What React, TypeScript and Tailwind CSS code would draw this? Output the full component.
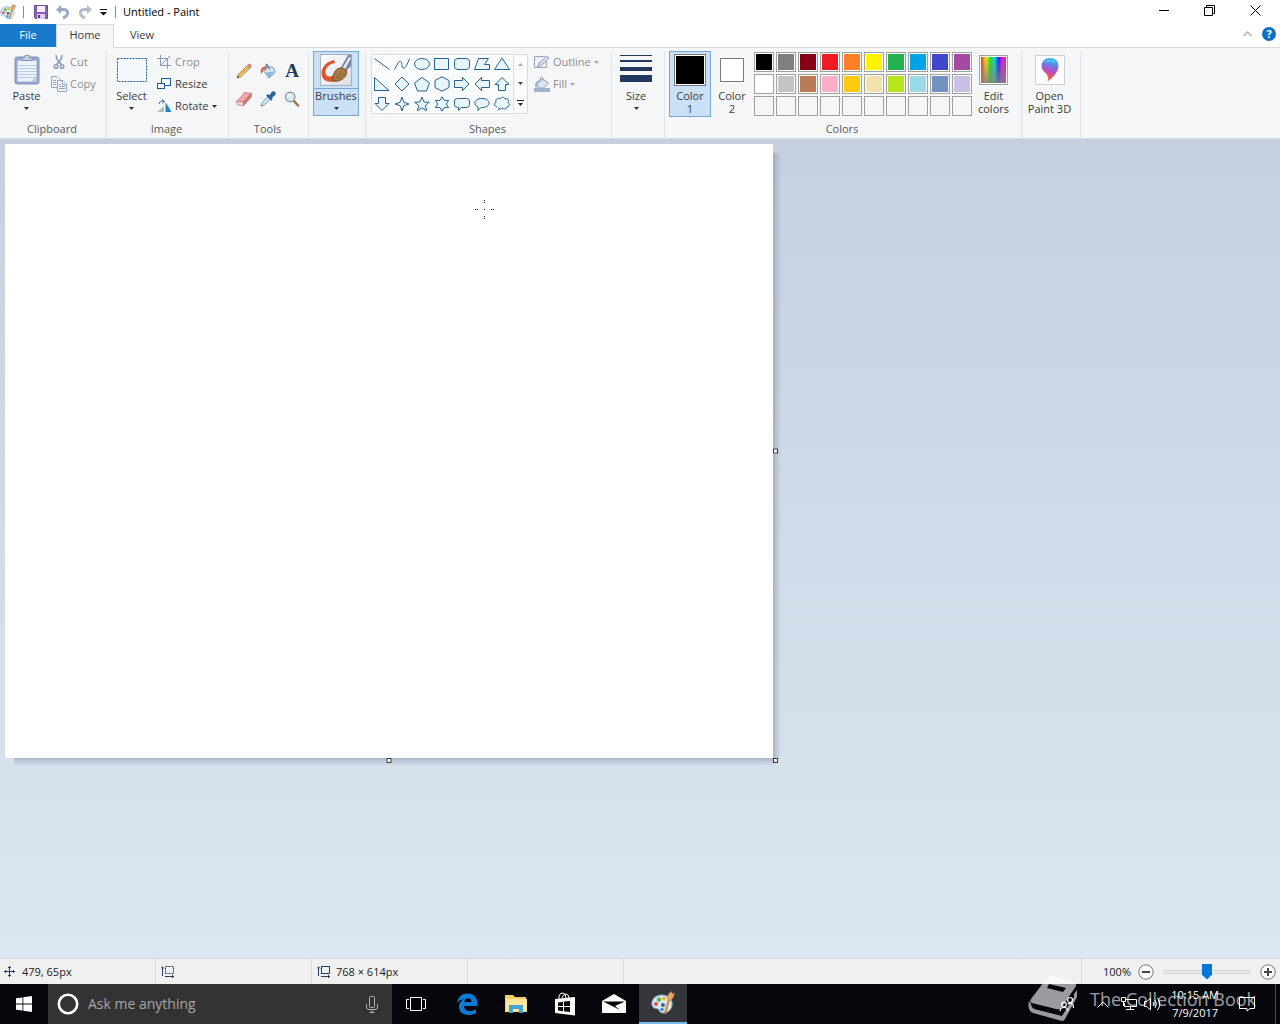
import React, { useState } from 'react';

const FONT = "font-['Open_Sans','Noto_Sans',sans-serif]";

const paletteRows = [
  ['#000000', '#7f7f7f', '#880015', '#ed1c24', '#ff7f27', '#fff200', '#22b14c', '#00a2e8', '#3f48cc', '#a349a4'],
  ['#ffffff', '#c3c3c3', '#b97a57', '#ffaec9', '#ffc90e', '#efe4b0', '#b5e61d', '#99d9ea', '#7092be', '#c8bfe7'],
];

const shapes = [
  { name: 'Line', d: 'M0.5 2.5 L15.5 13.5' },
  { name: 'Curve', d: 'M0.5 13.5 L3.5 8 C5.5 4 7.5 4.5 7.8 8.5 C8 13 10.5 13.5 12.5 9.5 L15.5 3' },
  { name: 'Oval', d: 'M0.5 8 A7.5 5.5 0 0 1 15.5 8 A7.5 5.5 0 0 1 0.5 8 Z' },
  { name: 'Rectangle', d: 'M0.5 2.5 H14.5 V13.5 H0.5 Z' },
  { name: 'Rounded rectangle', d: 'M4 2.5 H12 Q15.5 2.5 15.5 5.5 V10.5 Q15.5 13.5 12 13.5 H4 Q0.5 13.5 0.5 10.5 V5.5 Q0.5 2.5 4 2.5 Z' },
  { name: 'Polygon', d: 'M4.5 2.5 H14.5 L10.5 8.5 H15.5 V13.5 H0.5 Z' },
  { name: 'Triangle', d: 'M8 2 L15.5 13.5 H0.5 Z' },
  { name: 'Right triangle', d: 'M0.5 1.5 L15 14.5 H0.5 Z' },
  { name: 'Diamond', d: 'M8 1 L15 8 L8 15 L1 8 Z' },
  { name: 'Pentagon', d: 'M8 1.5 L15.5 7 L12.5 15 H3.5 L0.5 7 Z' },
  { name: 'Hexagon', d: 'M8 0.8 L15 4.5 V11.5 L8 15.2 L1 11.5 V4.5 Z' },
  { name: 'Right arrow', d: 'M0.5 4.5 H8.5 V1.5 L15 8 L8.5 14.5 V11.5 H0.5 Z' },
  { name: 'Left arrow', d: 'M15.5 4.5 H7.5 V1.5 L1 8 L7.5 14.5 V11.5 H15.5 Z' },
  { name: 'Up arrow', d: 'M4.5 14.5 V8.5 H1 L8 1.5 L15 8.5 H11.5 V14.5 Z' },
  { name: 'Down arrow', d: 'M4.5 1.5 V7.5 H1 L8 14.5 L15 7.5 H11.5 V1.5 Z' },
  { name: 'Four-point star', d: 'M8 1 L9.8 6.2 L15 8 L9.8 9.8 L8 15 L6.2 9.8 L1 8 L6.2 6.2 Z' },
  { name: 'Five-point star', d: 'M8 1 L10 6 L15.3 6.2 L11.2 9.7 L12.7 14.7 L8 11.8 L3.3 14.7 L4.8 9.7 L0.7 6.2 L6 6 Z' },
  { name: 'Six-point star', d: 'M8 0.8 L10 4.4 H14.6 L12.3 8 L14.6 11.6 H10 L8 15.2 L6 11.6 H1.4 L3.7 8 L1.4 4.4 H6 Z' },
  { name: 'Rounded callout', d: 'M3.5 2.5 H12.5 Q15.5 2.5 15.5 5 V8.5 Q15.5 11.5 12.5 11.5 H7.5 L4.5 14.5 V11.5 H3.5 Q0.5 11.5 0.5 8.5 V5 Q0.5 2.5 3.5 2.5 Z' },
  { name: 'Oval callout', d: 'M4 11 C-1.5 8.5 0.5 2.5 8 2.5 C17.5 2.5 17.5 11.5 8 11.5 L7 11.5 L4 14.5 Z' },
  { name: 'Cloud callout', d: 'M3 11 C0 10 0 7 2 6.5 C1 3 4 1.5 6 3 C7.5 0.8 10.5 0.8 11 3 C14 2 15.5 4.5 14 6.5 C16.5 8.5 15 11 13 11 C12.5 13.5 9.5 13.5 8.5 12 C7 13.5 4.5 13 4.5 11.5 M3.5 14.5 L5 13' },
];

const Caret = ({ className = 'fill-[#333]' }: { className?: string }) => (
  <svg width="5" height="3" viewBox="0 0 5 3" className={className} aria-hidden="true">
    <path d="M0 0 H5 L2.5 3 Z" />
  </svg>
);

const PaletteIcon = ({ size }: { size: number }) => (
  <svg width={size} height={size} viewBox="0 0 24 24" aria-hidden="true">
    <path d="M11 4 C4 4 0 9 1 14 C2 18 5 17 7 18 C9 19 8 22 12 22 C18 22 22 17 21 11 C20 7 16 4 11 4 Z" fill="#d7e9f5" stroke="#7fa9c8" />
    <circle cx="12" cy="14" r="2" fill="#44617e" />
    <circle cx="5" cy="13" r="2.1" fill="#e2574c" />
    <circle cx="8" cy="8.5" r="2.2" fill="#69b548" />
    <circle cx="13" cy="7.5" r="2" fill="#f3b72e" />
    <circle cx="11" cy="18.5" r="1.8" fill="#3c8fdc" />
    <path d="M17 8 L19 9 L15 23 L13 22 Z" fill="#d98632" />
    <path d="M16.5 8 C16 4 18 2 21 0.5 L21 3 L23.5 2 C23 5 22 8 19.5 9.5 Z" fill="#e9a563" stroke="#b87434" strokeWidth="0.6" />
  </svg>
);

const PasteIcon = () => (
  <svg width="26" height="32" viewBox="0 0 26 32" aria-hidden="true">
    <rect x="1" y="3" width="24" height="27" rx="2" fill="#92a5cd" stroke="#8295bf" />
    <rect x="3.5" y="6.5" width="19" height="21" fill="#edf2fb" />
    <path d="M4 11.5 H22 M4 14.5 H22 M4 17.5 H22 M4 20.5 H22 M4 23.5 H22" stroke="#bccbe5" />
    <path d="M17 27.5 L22.5 22 V27.5 Z" fill="#b8c6df" />
    <path d="M7 6.5 V4 H10 Q10 1 13 1 Q16 1 16 4 H19 V6.5 Z" fill="#c3cee2" stroke="#7f91b6" />
  </svg>
);

const CutIcon = () => (
  <svg width="16" height="16" viewBox="0 0 16 16" fill="none" stroke="#8b9bb8" strokeWidth="1.5" aria-hidden="true">
    <path d="M5 1 C5 5 7 7 11 11 M11 1 C11 5 9 7 5 11" />
    <circle cx="5" cy="12.5" r="1.8" />
    <circle cx="11" cy="12.5" r="1.8" />
  </svg>
);

const CopyIcon = () => (
  <svg width="16" height="16" viewBox="0 0 16 16" fill="#f1f4fa" stroke="#93a5c6" aria-hidden="true">
    <path d="M0.5 0.5 H6 L9.5 4 V11.5 H0.5 Z" />
    <path d="M2 4.5 H5 M2 6.5 H5 M2 8.5 H5" />
    <path d="M6.5 4.5 H12 L15.5 8 V15.5 H6.5 Z" />
    <path d="M11.5 4.5 V8.5 H15.5 M8 8.5 H10 M8 10.5 H14 M8 12.5 H14" />
  </svg>
);

const CropIcon = () => (
  <svg width="14" height="14" viewBox="0 0 14 14" fill="none" stroke="#8b9bbb" aria-hidden="true">
    <path d="M3.5 0 V10.5 H14 M0 3.5 H10.5 V14 M3.5 10.5 L13 1" />
  </svg>
);

const ResizeIcon = () => (
  <svg width="14" height="14" viewBox="0 0 14 14" fill="#f5f9fd" stroke="#1b5a96" aria-hidden="true">
    <rect x="4.5" y="1.5" width="9" height="7" />
    <rect x="0.5" y="6.5" width="7" height="5" />
  </svg>
);

const RotateIcon = () => (
  <svg width="15" height="14" viewBox="0 0 15 14" aria-hidden="true">
    <path d="M0 13 L7 7.5 V13 Z" fill="#b5b9bd" />
    <path d="M8.5 13 V3 L14.5 13 Z" fill="#2383c8" />
    <path d="M2 5 C2.5 2 4.5 1.5 7 2.5 M5 0.5 L7.5 2.5 L5 4.5" fill="none" stroke="#2b6ca8" />
  </svg>
);

const tools = [
  { name: 'Pencil', icon: (
    <svg width="16" height="16" viewBox="0 0 16 16">
      <path d="M1 15 L2.2 11.5 L11.5 2.5 L14 5 L4.5 14 Z" fill="#f6c566" stroke="#9a6a32" strokeWidth="0.7" />
      <path d="M11.5 2.5 L13 1 Q14 0.8 15 2 Q15.6 3 15 4 L14 5 Z" fill="#e88a83" stroke="#a35f58" strokeWidth="0.5" />
      <path d="M1 15 L1.7 13 L3 14.3 Z" fill="#222" />
      <path d="M3 12.8 L12.6 3.6" stroke="#c98b34" strokeWidth="0.7" />
    </svg>
  ) },
  { name: 'Fill with color', icon: (
    <svg width="16" height="16" viewBox="0 0 16 16">
      <path d="M6.5 3.5 L13 4.5 L15.5 9 L9 15 L4 8.5 Z" fill="#d3e6f4" stroke="#5781a5" strokeWidth="0.8" />
      <path d="M5.5 9.5 L14.8 8.5 L9 14.3 Z" fill="#89b8da" />
      <path d="M6 7 V2 Q6 0.3 7.3 1.3 L9.5 6.5" fill="none" stroke="#4d6680" />
      <path d="M0.5 8 C1 4.5 3 3 6.5 3.5 L4.5 6.5 C3 7 2.5 10.5 1.5 10.5 Q0.5 10 0.5 8 Z" fill="#e0653f" />
    </svg>
  ) },
  { name: 'Text', icon: <span className="font-['Liberation_Serif',serif] text-[19px] leading-4 font-bold text-[#213a5e]">A</span> },
  { name: 'Eraser', icon: (
    <svg width="16" height="16" viewBox="0 0 16 16" stroke="#b75f64" strokeWidth="0.6">
      <path d="M0.8 10.5 L8.5 1.5 L15.3 2.3 L7.5 11 Z" fill="#f2a9ab" />
      <path d="M0.8 10.5 L7.5 11 V14.8 L1.3 13.8 Z" fill="#fbd5d4" />
      <path d="M7.5 11 L15.3 2.3 V6 L7.5 14.8 Z" fill="#dd7278" />
    </svg>
  ) },
  { name: 'Color picker', icon: (
    <svg width="16" height="16" viewBox="0 0 16 16">
      <path d="M1 15 L2 12 L8 5.5 L10.5 8 L4.2 14 Z" fill="#d5e9f6" stroke="#58799b" strokeWidth="0.8" />
      <path d="M6.5 4.5 L8 3.5 L9.5 4.5 L12 1 Q14 0 15.2 1.5 Q15.8 3 14.7 4.2 L11.5 7 L12.3 8.3 L11 9.5 Z" fill="#2866a0" stroke="#1c4d80" strokeWidth="0.5" />
    </svg>
  ) },
  { name: 'Magnifier', icon: (
    <svg width="16" height="16" viewBox="0 0 16 16">
      <path d="M9.5 9.5 L14 14.5" stroke="#9a6d42" strokeWidth="2.4" strokeLinecap="round" />
      <circle cx="6.2" cy="6" r="4.7" fill="#d9edf9" stroke="#8a98a6" strokeWidth="1.4" />
      <path d="M3.5 6 Q4 3.5 6.5 3.4" fill="none" stroke="#fff" />
    </svg>
  ) },
];

const BrushIcon = () => (
  <svg width="32" height="32" viewBox="0 0 32 32" aria-hidden="true">
    <defs>
      <linearGradient id="brushBg" x1="0" y1="0" x2="1" y2="1">
        <stop offset="0" stopColor="#ffffff" />
        <stop offset="1" stopColor="#d9dde3" />
      </linearGradient>
    </defs>
    <rect x="0.5" y="0.5" width="31" height="31" fill="url(#brushBg)" stroke="#a5b0bc" />
    <path d="M14 6 C5 8 0 15 2 22 C4 29 12 29 20 25 L15 20 C10 24 6 23 5.5 19 C5 14 9 10 15 9 Z" fill="#e0532b" />
    <path d="M20 15 L28 1 H31 V12 L25 18 Z" fill="#7885a3" />
    <path d="M22 15 L29 3 L31 4 L24 17 Z" fill="#e8ecf3" />
    <path d="M13 25 C13 19 16 14 21 14 C25 14 28 17 26 21 C23 26 19 28 12 27 Z" fill="#a77a45" stroke="#6e4b25" />
    <path d="M16 24 L22 17 M18 25 L24 19" stroke="#8d6433" />
  </svg>
);

const OutlineIcon = () => (
  <svg width="16" height="14" viewBox="0 0 16 14" fill="#eef1f6" stroke="#98a6bd" aria-hidden="true">
    <path d="M12.5 6 V12.5 H0.5 V1.5 H11" />
    <path d="M3.5 12 L5 8 L13 0.8 L15.2 3 L7.5 10.5 Z" fill="#cfd7e5" />
  </svg>
);

const FillIcon = () => (
  <svg width="16" height="16" viewBox="0 0 16 16" aria-hidden="true">
    <rect x="0" y="12" width="16" height="4" fill="#a3b3cf" />
    <path d="M8 2.5 L14.5 7 L9.5 12 H5 L3 8 Z" fill="#dce4f0" stroke="#8fa1c1" />
    <path d="M6.5 6 V1.5 Q7.5 0 8.5 1.5 L10 5" fill="none" stroke="#8fa1c1" />
    <path d="M1 11 C1 6 2.5 4.5 6 4.5 L3.5 8 L3 12 Z" fill="#a0b1cf" />
  </svg>
);

const EditColorsIcon = () => (
  <svg width="29" height="30" viewBox="0 0 29 30" aria-hidden="true">
    <defs>
      <linearGradient id="spectrum">
        <stop offset="0" stopColor="#f22" />
        <stop offset="0.2" stopColor="#ee1" />
        <stop offset="0.38" stopColor="#2d2" />
        <stop offset="0.54" stopColor="#1dd" />
        <stop offset="0.7" stopColor="#22e" />
        <stop offset="0.86" stopColor="#e1e" />
        <stop offset="1" stopColor="#e23" />
      </linearGradient>
      <linearGradient id="spectrumFade" x1="0" y1="0" x2="0" y2="1">
        <stop offset="0" stopColor="#808080" stopOpacity="0" />
        <stop offset="1" stopColor="#808080" stopOpacity="0.85" />
      </linearGradient>
    </defs>
    <rect x="0.5" y="0.5" width="28" height="29" fill="#fff" stroke="#a0a0a0" />
    <rect x="2" y="2" width="25" height="26" fill="url(#spectrum)" />
    <rect x="2" y="2" width="25" height="26" fill="url(#spectrumFade)" />
  </svg>
);

const Paint3DIcon = () => (
  <svg width="30" height="30" viewBox="0 0 30 30" aria-hidden="true">
    <defs>
      <linearGradient id="drop" x1="0.6" y1="0" x2="0.4" y2="1">
        <stop offset="0" stopColor="#28bdf0" />
        <stop offset="0.3" stopColor="#6b80e4" />
        <stop offset="0.5" stopColor="#b056c8" />
        <stop offset="0.7" stopColor="#ee4a6a" />
        <stop offset="1" stopColor="#f9803c" />
      </linearGradient>
    </defs>
    <rect x="0.5" y="0.5" width="29" height="29" fill="#fff" stroke="#cfcfcf" />
    <path d="M15 3 C20 3 23.5 6.5 23.5 11 C23.5 17 18 22 12.5 27 C13.5 23 13 21 11 18.5 C8 16 6.5 14 6.5 11 C6.5 6.5 10 3 15 3 Z" fill="url(#drop)" />
    <path d="M9 8 C11 4 18 3 21 8 C17 6 13 6 9 8 Z" fill="#53d4f3" opacity="0.7" />
    <path d="M15 12 C18 10 21 11 22 14 C20 18 17 20 15 21 Z" fill="#8a5ae0" opacity="0.4" />
  </svg>
);

type GroupProps = { label?: string; className: string; children: React.ReactNode };

const Group = ({ label, className, children }: GroupProps) => (
  <section className={`flex shrink-0 flex-col border-r border-[#e2e3e4] ${className}`}>
    <div className="flex flex-1 items-start">{children}</div>
    {label && <h2 className="h-[18px] pr-[2px] text-center leading-[18px] text-[#5a5a5a]">{label}</h2>}
  </section>
);

type SmallButtonProps = { icon: React.ReactNode; label: string; disabled?: boolean; caret?: boolean };

const SmallButton = ({ icon, label, disabled, caret }: SmallButtonProps) => (
  <button disabled={disabled} className="flex h-[22px] items-center gap-[3px] whitespace-nowrap text-[#3b3b3b] disabled:text-[#8d8d8d]">
    <span className="flex w-4 justify-center">{icon}</span>
    <span className="pb-[2px]">{label}</span>
    {caret && <Caret className={disabled ? 'fill-[#aaa]' : 'fill-[#333]'} />}
  </button>
);

const TitleBar = () => (
  <header className="flex h-6 items-center bg-white">
    <PaletteIcon size={16} />
    <span className="ml-[7px] h-3 w-px bg-[#8a8a8a]" />
    <button aria-label="Save" className="ml-[10px]">
      <svg width="14" height="14" viewBox="0 0 14 14">
        <path d="M0.5 0.5 H13.5 V13.5 H1.5 L0.5 12.5 Z" fill="#8b62b3" stroke="#6d4a98" />
        <rect x="3" y="1" width="8" height="6" fill="#f3eff8" />
        <rect x="3" y="9" width="8" height="5" fill="#d9cfe6" />
        <rect x="4" y="10" width="2" height="3" fill="#5d4182" />
      </svg>
    </button>
    <button aria-label="Undo" className="ml-2">
      <svg width="14" height="14" viewBox="0 0 14 14">
        <path d="M3 4.5 H8 Q12 5 11.5 8.5 Q11 11.5 7 13" fill="none" stroke="#9aa9c4" strokeWidth="3" />
        <path d="M0 4.5 L5 0 V9 Z" fill="#9aa9c4" />
      </svg>
    </button>
    <button aria-label="Redo" className="ml-2">
      <svg width="14" height="14" viewBox="0 0 14 14">
        <path d="M10 4.5 H6 Q2 5 2.5 8.5 Q3 11.5 7 13" fill="none" stroke="#b3bdce" strokeWidth="3" />
        <path d="M14 4.5 L9 0 V9 Z" fill="#b3bdce" />
      </svg>
    </button>
    <button aria-label="Customize Quick Access Toolbar" className="ml-2">
      <svg width="7" height="7" viewBox="0 0 7 7">
        <path d="M0 0.5 H7" stroke="#111" />
        <path d="M0 3 H7 L3.5 6.5 Z" fill="#111" />
      </svg>
    </button>
    <span className="ml-2 h-3 w-px bg-[#8a8a8a]" />
    <h1 className="ml-[7px] flex-1 text-black">Untitled - Paint</h1>
    <div className="flex pr-px pb-1">
      <button aria-label="Minimize" className="flex h-5 w-[45px] items-center justify-center">
        <svg width="11" height="11" viewBox="0 0 11 11"><path d="M0 5.5 H10" stroke="#000" /></svg>
      </button>
      <button aria-label="Restore" className="flex h-5 w-[45px] items-center justify-center">
        <svg width="11" height="11" viewBox="0 0 11 11" fill="none" stroke="#000"><path d="M0.5 2.5 H8.5 V10.5 H0.5 Z M2.5 2.5 V0.5 H10.5 V8.5 H8.5" /></svg>
      </button>
      <button aria-label="Close" className="flex h-5 w-[47px] items-center justify-center">
        <svg width="11" height="11" viewBox="0 0 11 11" stroke="#000"><path d="M0.5 0.5 L10.5 10.5 M10.5 0.5 L0.5 10.5" /></svg>
      </button>
    </div>
  </header>
);

const Tabs = () => (
  <nav className="flex h-6 items-stretch bg-white">
    <button className="mb-px w-14 bg-[#1979ca] pb-[2px] text-white">File</button>
    <button className="w-[58px] border-x border-t border-[#dadbdc] bg-[#f5f6f7] pb-[3px] text-[#3b3b3b]">Home</button>
    <button className="w-14 border-b border-[#dadbdc] pb-[2px] text-[#3b3b3b]">View</button>
    <div className="flex flex-1 items-center justify-end gap-[10px] border-b border-[#dadbdc] pr-1 pb-[3px]">
      <button aria-label="Minimize the Ribbon">
        <svg width="9" height="6" viewBox="0 0 9 6" fill="none" stroke="#b5aeaa" strokeWidth="1.4"><path d="M0.5 5 L4.5 1 L8.5 5" /></svg>
      </button>
      <button aria-label="Help" className="size-[14px] rounded-full bg-[#0f6fc6] text-[11px] leading-[14px] font-bold text-white">?</button>
    </div>
  </nav>
);

const Ribbon = () => (
  <div className="flex h-[91px] overflow-hidden border-b border-[#d5dae2] bg-[#f5f6f7] pt-[3px] leading-[13px] text-[#3b3b3b]">
    <Group label="Clipboard" className="w-[107px]">
      <button className="ml-1 flex w-[45px] flex-col items-center pt-[3px]">
        <PasteIcon />
        <span className="mt-[3px] mb-[5px]">Paste</span>
        <Caret />
      </button>
      <div className="ml-[2px]">
        <SmallButton icon={<CutIcon />} label="Cut" disabled />
        <SmallButton icon={<CopyIcon />} label="Copy" disabled />
      </div>
    </Group>

    <Group label="Image" className="w-[122px]">
      <button className="ml-[3px] flex w-[43px] flex-col items-center pt-[3px]">
        <svg width="32" height="32" viewBox="0 0 32 32">
          <rect x="1.5" y="4.5" width="29" height="23" fill="#f4f9fe" stroke="#255f99" strokeDasharray="2 1" />
        </svg>
        <span className="mt-[3px] mb-[5px]">Select</span>
        <Caret />
      </button>
      <div className="ml-[3px]">
        <SmallButton icon={<CropIcon />} label="Crop" disabled />
        <SmallButton icon={<ResizeIcon />} label="Resize" />
        <SmallButton icon={<RotateIcon />} label="Rotate" caret />
      </div>
    </Group>

    <Group label="Tools" className="w-20">
      <div className="grid grid-cols-3 gap-x-2 gap-y-3 pt-3 pl-[7px]">
        {tools.map((tool) => (
          <button key={tool.name} aria-label={tool.name} className="flex size-4 items-center justify-center">{tool.icon}</button>
        ))}
      </div>
    </Group>

    <Group className="w-[57px]">
      <button className="ml-1 flex w-[46px] flex-col items-center border border-[#79a5d3] bg-[#c9e0f7] pt-[2px] pb-[5px]">
        <BrushIcon />
        <span className="mt-[2px] mb-[5px] w-full border-t border-[#79a5d3]">Brushes</span>
        <Caret />
      </button>
    </Group>

    <Group label="Shapes" className="w-[246px]">
      <div className="mt-[3px] ml-[5px] flex h-[60px] border border-[#d5dce4] bg-[#fafcfe]">
        <div className="grid grid-cols-7 gap-x-1 gap-y-1 py-px pr-[3px] pl-[2px]">
          {shapes.map((shape) => (
            <button key={shape.name} aria-label={shape.name} className="size-4">
              <svg width="16" height="16" viewBox="0 0 16 16" fill={/Line|Curve/.test(shape.name) ? 'none' : '#e8f5fc'} stroke="#28618f">
                <path d={shape.d} />
              </svg>
            </button>
          ))}
        </div>
        <div className="flex w-[14px] flex-col border-l border-[#d5dce4]">
          <button aria-label="Scroll up" className="flex flex-1 items-center justify-center"><Caret className="rotate-180 fill-[#aaa]" /></button>
          <button aria-label="Scroll down" className="flex flex-1 items-center justify-center"><Caret className="fill-[#444]" /></button>
          <button aria-label="More shapes" className="flex flex-1 items-center justify-center">
            <svg width="7" height="6" viewBox="0 0 7 6"><path d="M0 0.5 H7" stroke="#223" /><path d="M1 3 H6 L3.5 6 Z" fill="#223" /></svg>
          </button>
        </div>
      </div>
      <div className="ml-[6px]">
        <SmallButton icon={<OutlineIcon />} label="Outline" disabled caret />
        <SmallButton icon={<FillIcon />} label="Fill" disabled caret />
      </div>
    </Group>

    <Group className="w-[53px]">
      <button className="flex w-12 flex-col items-center pt-[3px]">
        <svg width="32" height="32" viewBox="0 0 32 32" fill="#22395f">
          <path d="M0 1 H32 V2 H0 Z M0 6 H32 V8 H0 Z M0 13 H32 V17 H0 Z M0 21 H32 V28 H0 Z" />
        </svg>
        <span className="mt-[3px] mb-[5px]">Size</span>
        <Caret />
      </button>
    </Group>

    <Group label="Colors" className="w-[357px]">
      <button className="ml-1 flex h-[66px] w-[42px] flex-col items-center border border-[#79a5d3] bg-[#c9e0f7] pt-[2px]">
        <span className="size-8 border border-[#7a7a7a] bg-black ring-1 ring-white ring-inset" />
        <span className="mt-[3px] w-8">Color 1</span>
      </button>
      <button className="flex h-[66px] w-[42px] flex-col items-center pt-[3px]">
        <span className="my-1 size-6 border border-[#7a7a7a] bg-white" />
        <span className="mt-[3px] w-8">Color 2</span>
      </button>
      <div className="mt-px ml-[1px] grid grid-cols-10 gap-[2px]">
        {paletteRows.flat().map((color) => (
          <button key={color} aria-label={color} className="size-5 border border-[#a0a0a0] bg-white p-px">
            <span className="block size-4" style={{ backgroundColor: color }} />
          </button>
        ))}
        {paletteRows[0].map((color, i) => (
          <button key={i} aria-label={`Custom color ${i + 1}`} className="size-5 border border-[#a0a0a0]" />
        ))}
      </div>
      <button className="flex w-[43px] flex-col items-center pt-[4px]">
        <EditColorsIcon />
        <span className="mt-1 w-8">Edit colors</span>
      </button>
    </Group>

    <Group className="w-[59px]">
      <button className="flex w-[55px] flex-col items-center pt-[4px]">
        <Paint3DIcon />
        <span className="mt-1 whitespace-nowrap">Open<br />Paint 3D</span>
      </button>
    </Group>
  </div>
);

const Handle = ({ className }: { className: string }) => (
  <div className={`absolute size-[5px] border border-[#333] bg-white ${className}`} />
);

const Workspace = () => (
  <main className="flex-1 bg-gradient-to-b from-[#c5cfdf] to-[#dce6f2] p-[5px]">
    <div className="relative h-[614px] w-[768px] bg-white">
      <div className="absolute top-[9px] bottom-0 left-full w-2 bg-gradient-to-r from-[#7d8ba5]/50 to-transparent" />
      <div className="absolute top-full right-0 left-[9px] h-2 bg-gradient-to-b from-[#7d8ba5]/50 to-transparent" />
      <Handle className="top-1/2 left-full -translate-y-1/2" />
      <Handle className="top-full left-1/2 -translate-x-1/2" />
      <Handle className="top-full left-full" />
      <svg width="19" height="19" viewBox="0 0 19 19" className="absolute top-14 left-[470px]" aria-hidden="true">
        <path d="M9 0h1v1h-1z M9 2h1v1h-1z M9 9h1v1h-1z M9 16h1v1h-1z M9 18h1v1h-1z M0 9h1v1h-1z M2 9h1v1h-1z M16 9h1v1h-1z M18 9h1v1h-1z" />
      </svg>
    </div>
  </main>
);

const StatusBar = () => {
  const [zoom, setZoom] = useState(50);

  return (
    <footer className="flex h-[26px] items-center border-t border-[#d3dae3] bg-[#f0f0f0] text-[#1a1a1a]">
      <div className="flex h-full w-[156px] items-center gap-[7px] border-r border-[#dadada] pl-1">
        <svg width="11" height="11" viewBox="0 0 11 11" fill="none" stroke="#243f63"><path d="M5.5 0 V11 M0 5.5 H11 M4 2 L5.5 0.5 L7 2 M4 9 L5.5 10.5 L7 9 M2 4 L0.5 5.5 L2 7 M9 4 L10.5 5.5 L9 7" /></svg>
        479, 65px
      </div>
      <div className="flex h-full w-[156px] items-center border-r border-[#dadada] pl-[5px]">
        <svg width="14" height="12" viewBox="0 0 14 12" fill="none" stroke="#243f63"><path d="M1.5 10 V0.5 M0 2.5 L1.5 1 L3 2.5 M4 10.5 H13 M11 9 L12.5 10.5 L11 12" /><rect x="4.5" y="0.5" width="8" height="7" strokeDasharray="2 1" /></svg>
      </div>
      <div className="flex h-full w-[156px] items-center gap-[5px] border-r border-[#dadada] pl-[5px]">
        <svg width="14" height="12" viewBox="0 0 14 12" fill="none" stroke="#243f63"><path d="M1.5 10 V0.5 M0 2.5 L1.5 1 L3 2.5 M4 10.5 H13 M11 9 L12.5 10.5 L11 12" /><rect x="4.5" y="0.5" width="8" height="7" /></svg>
        768 × 614px
      </div>
      <div className="h-full w-[156px] border-r border-[#dadada]" />
      <div className="h-full flex-1 border-r border-[#dadada]" />
      <div className="flex items-center pr-1 pl-[21px]">
        <span>100%</span>
        <button aria-label="Zoom out" className="ml-[7px]">
          <svg width="16" height="16" viewBox="0 0 16 16" fill="#fafafa" stroke="#777"><circle cx="8" cy="8" r="7.2" /><path d="M4 8 H12" stroke="#444" strokeWidth="2" /></svg>
        </button>
        <input
          type="range"
          aria-label="Zoom"
          value={zoom}
          onChange={(e) => setZoom(Number(e.target.value))}
          className="mx-[10px] h-4 w-[86px] appearance-none bg-transparent [&::-webkit-slider-runnable-track]:h-1 [&::-webkit-slider-runnable-track]:border [&::-webkit-slider-runnable-track]:border-[#d6d6d6] [&::-webkit-slider-runnable-track]:bg-[#e7eaea] [&::-webkit-slider-thumb]:-mt-[7px] [&::-webkit-slider-thumb]:h-4 [&::-webkit-slider-thumb]:w-[10px] [&::-webkit-slider-thumb]:appearance-none [&::-webkit-slider-thumb]:bg-[#0078d7] [&::-webkit-slider-thumb]:[clip-path:polygon(0_0,100%_0,100%_70%,50%_100%,0_70%)]"
        />
        <button aria-label="Zoom in">
          <svg width="16" height="16" viewBox="0 0 16 16" fill="#fafafa" stroke="#777"><circle cx="8" cy="8" r="7.2" /><path d="M4 8 H12 M8 4 V12" stroke="#444" strokeWidth="2" /></svg>
        </button>
      </div>
    </footer>
  );
};

const apps = [
  { name: 'Microsoft Edge', icon: (
    <svg width="22" height="22" viewBox="0 0 22 22" fill="#0b7bd6">
      <path d="M1 10 C2 3.5 6.5 0.5 11.5 0.5 C18 0.5 21.5 5 21.5 10.5 V13 H8 C8.3 19 15.5 19 20 16.2 V20.3 C12 24 3 21.5 3 14 C3 10 5.5 7.3 8.5 6 C5.5 6.3 2.8 7.5 1 10 Z M8.2 9 H15.5 C15.5 3.8 8.7 4.2 8.2 9 Z" fillRule="evenodd" />
    </svg>
  ) },
  { name: 'File Explorer', icon: (
    <svg width="22" height="20" viewBox="0 0 22 20">
      <path d="M0 1 H8 L10 3 H21 V18 H0 Z" fill="#f5cf65" />
      <path d="M1 5 H22 V18 H1 Z" fill="#fde69a" />
      <path d="M4 19 V11 H18 V19 H14 V15 H8 V19 Z" fill="#42a3d5" />
    </svg>
  ) },
  { name: 'Store', icon: (
    <svg width="22" height="24" viewBox="0 0 22 24">
      <path d="M5 7 V4 Q6 0.7 9 1 Q12 1.5 12 6 M8 6 Q9 2 12 2 Q15 2.5 15 6" fill="none" stroke="#fff" />
      <path d="M1 7 L21 5 V23.5 L1 21 Z" fill="#fff" />
      <path d="M4 10.5 L9 9.8 V13.9 H4 Z M10 9.6 L16 9 V13.9 H10 Z M4 14.9 H9 V19.2 L4 18.5 Z M10 14.9 H16 V20 L10 19.3 Z" fill="#05070d" />
    </svg>
  ) },
  { name: 'Mail', icon: (
    <svg width="24" height="20" viewBox="0 0 24 20">
      <path d="M0 7 L12 0 L24 7 V19 H0 Z" fill="#fff" />
      <path d="M1 7.5 H23 L13 12 L18 16 L10 12 Z" fill="#05070d" />
    </svg>
  ) },
];

const Taskbar = () => (
  <div className="relative flex h-10 items-stretch bg-[#04060c] text-white">
    <button aria-label="Start" className="flex w-12 items-center justify-center">
      <svg width="16" height="16" viewBox="0 0 16 16" fill="#fff"><path d="M0 2.3 L6.5 1.4 V7.6 H0 Z M7.3 1.3 L16 0 V7.6 H7.3 Z M0 8.4 H6.5 V14.6 L0 13.7 Z M7.3 8.4 H16 V16 L7.3 14.7 Z" /></svg>
    </button>
    <label className="flex w-[344px] items-center bg-[#333] pr-[14px] pl-[9px]">
      <svg width="22" height="22" viewBox="0 0 22 22" aria-hidden="true"><circle cx="11" cy="11" r="9.2" fill="none" stroke="#fff" strokeWidth="2.6" /></svg>
      <input aria-label="Search" placeholder="Ask me anything" className="mx-[9px] h-6 min-w-0 flex-1 bg-transparent text-[14px] leading-6 outline-none placeholder:text-[#a6a6a6]" />
      <svg width="12" height="17" viewBox="0 0 12 17" fill="none" stroke="#b0b0b0" aria-hidden="true"><rect x="3.5" y="0.5" width="5" height="11" rx="1" /><path d="M0.5 8 V11 Q0.5 13.5 3 13.5 H9 Q11.5 13.5 11.5 11 V8 M6 13.5 V16.5 M3.5 16.5 H8.5" /></svg>
    </label>
    <button aria-label="Task View" className="flex w-12 items-center justify-center">
      <svg width="20" height="14" viewBox="0 0 20 14" fill="none" stroke="#fff"><path d="M4.5 0.5 H15.5 V13.5 H4.5 Z M3 2.5 H0.5 V11.5 H3 M17 2.5 H19.5 V11.5 H17" /></svg>
    </button>
    <div className="ml-[3px] flex gap-px">
      {apps.map((app) => (
        <button key={app.name} aria-label={app.name} className="flex w-12 items-center justify-center">{app.icon}</button>
      ))}
      <button aria-label="Paint" className="flex w-12 items-center justify-center border-b-2 border-[#76b9ed] bg-[#34363b]">
        <PaletteIcon size={24} />
      </button>
    </div>
    <div className="ml-auto flex items-center pr-1">
      <button aria-label="People">
        <svg width="16" height="16" viewBox="0 0 16 16" fill="none" stroke="#fff" strokeWidth="1.2"><circle cx="11" cy="4" r="2.5" /><circle cx="5" cy="8.5" r="2.3" /><path d="M1 15 Q1 11.5 5 11.5 Q9 11.5 9 15 M8.5 8 Q14.5 5.5 14.5 12" /></svg>
      </button>
      <button aria-label="Show hidden icons" className="ml-[22px]">
        <svg width="12" height="7" viewBox="0 0 12 7" fill="none" stroke="#fff"><path d="M0.5 6.5 L6 1 L11.5 6.5" /></svg>
      </button>
      <button aria-label="Network" className="ml-3">
        <svg width="16" height="14" viewBox="0 0 16 14" fill="none" stroke="#fff"><path d="M5 2.5 H15.5 V9.5 H3.5 V6 M9.5 9.5 V12.5 M5 12.5 H13 M0.5 0.5 H4.5 V4.5 H0.5 Z M2.5 4.5 V9" /></svg>
      </button>
      <button aria-label="Volume" className="ml-[7px]">
        <svg width="17" height="14" viewBox="0 0 17 14" fill="none" stroke="#fff"><path d="M0.5 4.5 H3 L6.5 1 V13 L3 9.5 H0.5 Z M9 5 Q10.5 7 9 9 M11 3 Q14 7 11 11 M13.5 1 Q18 7 13.5 13" /></svg>
      </button>
      <button className="ml-[10px] text-center text-[11px] leading-[18px]">10:15 AM<br />7/9/2017</button>
      <button aria-label="Action Center" className="ml-5">
        <svg width="16" height="16" viewBox="0 0 16 16" fill="none" stroke="#fff"><path d="M0.5 1.5 H15.5 V12.5 H11 L8 15 V12.5 H0.5 Z" /></svg>
      </button>
      <span className="ml-5 h-10 w-px bg-[#4a4c50]" />
    </div>
    <div className="pointer-events-none absolute right-6 bottom-px flex items-center gap-3 opacity-60">
      <svg width="50" height="48" viewBox="0 0 50 48" aria-hidden="true">
        <path d="M19 3 Q21 0 25 1 L46 7 Q49 8 48 11 L34 32 Q32 35 28 34 L4 28 Q1 27 3 24 Z M21 9 L19 13 L35 17 L38 13 Z" fill="#fff" fillRule="evenodd" />
        <path d="M1 26 Q-1 35 5 38 L34 46 Q36 46 37 44 L49 22 V15 L46 19 V22 L34 41 L6 34 Q3 32 3 29 Z" fill="#fff" />
      </svg>
      <span className="text-[18px] leading-6">The Collection Book</span>
    </div>
  </div>
);

export default function App() {
  return (
    <div className={`flex min-h-screen flex-col text-[11px] leading-4 ${FONT}`}>
      <TitleBar />
      <Tabs />
      <Ribbon />
      <Workspace />
      <StatusBar />
      <Taskbar />
    </div>
  );
}
